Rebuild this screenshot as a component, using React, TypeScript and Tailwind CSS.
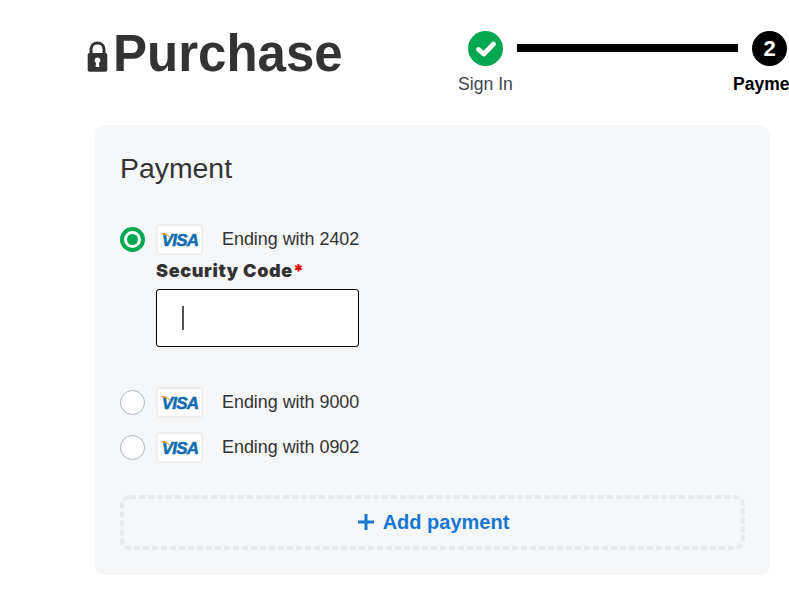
import React from "react";

function VisaCard() {
  return (
    <div className="relative flex h-[31px] w-[47px] shrink-0 items-center justify-center rounded-[3px] border-2 border-[#eeeeee] bg-white">
      <span className="relative ml-[1px] mt-[1px] text-[17px] font-bold italic leading-none tracking-[-0.8px] text-[#0f6cb0] [-webkit-text-stroke:0.5px_#0f6cb0] [font-family:'Liberation_Sans',sans-serif]">
        VISA
      </span>
      <svg className="absolute left-[3px] top-[6px]" width="14" height="10" viewBox="0 0 14 10" aria-hidden="true">
        <path d="M0 1 C4 0.5 8 1.5 10.5 7.5 C8.5 4.5 5 2.8 0 1.8 Z" fill="#e9a83a" />
      </svg>
    </div>
  );
}

function Radio({ checked }: { checked?: boolean }) {
  return checked ? (
    <div className="flex h-[25px] w-[25px] shrink-0 items-center justify-center rounded-full border-[4px] border-[#00a94f] bg-white">
      <div className="h-[11px] w-[11px] rounded-full bg-[#00a94f]" />
    </div>
  ) : (
    <div className="h-[25px] w-[25px] shrink-0 rounded-full border border-[#aab4c0] bg-white" />
  );
}

function PaymentRow({ ending, checked }: { ending: string; checked?: boolean }) {
  return (
    <div className="flex items-center">
      <Radio checked={checked} />
      <div className="ml-[11px]">
        <VisaCard />
      </div>
      <span className="mb-[2px] ml-[19px] text-[17.9px] leading-[22px] text-[#333333]">Ending with {ending}</span>
    </div>
  );
}

export default function App() {
  return (
    <div className="h-[589px] w-[789px] overflow-hidden bg-white text-[#333333] [font-family:'Liberation_Sans',Arial,sans-serif]">
      <header className="flex h-[125px] items-start pl-[87px]">
        <div className="flex w-[381px] items-start pt-[26px]">
          <svg className="mt-[15px]" width="21" height="31" viewBox="0 0 21 31" aria-hidden="true">
            <path d="M4 14 V8.5 C4 4.5 6.6 2 10.5 2 C14.4 2 17 4.5 17 8.5 V14" fill="none" stroke="#333333" strokeWidth="3" />
            <path fillRule="evenodd" d="M2.5 12 H18.5 A1.8 1.8 0 0 1 20.3 13.8 V29 A1.8 1.8 0 0 1 18.5 30.8 H2.5 A1.8 1.8 0 0 1 0.7 29 V13.8 A1.8 1.8 0 0 1 2.5 12 Z M10.5 16.5 A2.9 2.9 0 0 0 9 21.9 L8.6 26 H12.4 L12 21.9 A2.9 2.9 0 0 0 10.5 16.5 Z" fill="#333333" />
          </svg>
          <h1 className="ml-[5px] text-[51px] font-bold leading-[56px] text-[#333333]">Purchase</h1>
        </div>
        <div className="flex items-start pt-[31px]">
          <div className="flex w-[35px] flex-col items-center">
            <div className="flex h-[35px] w-[35px] items-center justify-center rounded-full bg-[#00a94f]">
              <svg width="22" height="18" viewBox="0 0 22 18" aria-hidden="true">
                <path d="M3.5 9.5 L8.8 14 L18.5 4" fill="none" stroke="#ffffff" strokeWidth="4.8" strokeLinecap="round" strokeLinejoin="round" />
              </svg>
            </div>
            <span className="mt-[8px] whitespace-nowrap text-[17.6px] leading-[20px] text-[#3c4650]">Sign In</span>
          </div>
          <div className="mx-[14px] mt-[13px] h-[8px] w-[221px] bg-black" />
          <div className="flex w-[35px] flex-col items-center">
            <div className="flex h-[35px] w-[35px] items-center justify-center rounded-full bg-black text-[22px] font-bold text-white">
              2
            </div>
            <span className="mt-[8px] whitespace-nowrap text-[17.5px] font-bold leading-[20px] text-black">Payment</span>
          </div>
        </div>
      </header>

      <main className="ml-[95px] h-[450px] w-[675px] rounded-[10px] bg-[#f5f6f8] px-[25px] pt-[27px]">
        <h2 className="text-[28.4px] font-normal leading-[32px] text-[#333333]">Payment</h2>

        <div className="mt-[40px]">
          <PaymentRow ending="2402" checked />
          <div className="ml-[36px] mt-[4px]">
            <div className="text-[18px] font-black leading-[24px] tracking-[0.65px] text-[#333333] [font-family:Inter,sans-serif]">
              Security Code<span className="text-[#e00000]">*</span>
            </div>
            <div className="mt-[6px] flex h-[58px] w-[203px] items-center rounded-[3px] border border-black bg-white pl-[25px]">
              <div className="h-[24px] w-[2px] bg-[#555555]" />
            </div>
          </div>
        </div>

        <div className="mt-[40px] flex flex-col gap-[14px]">
          <PaymentRow ending="9000" />
          <PaymentRow ending="0902" />
        </div>

        <button className="relative mt-[32px] flex h-[55px] w-[625px] items-center justify-center gap-[8px] pb-[2px] text-[20px] font-bold text-[#1976d2]">
          <svg className="absolute inset-0" width="625" height="55" viewBox="0 0 625 55" aria-hidden="true">
            <rect x="2" y="2" width="621" height="51" rx="8" fill="none" stroke="#e8e9eb" strokeWidth="4" strokeDasharray="6 3" />
          </svg>
          <svg className="ml-[1px]" width="18" height="18" viewBox="0 0 18 18" aria-hidden="true">
            <path d="M9 1 V17 M1 9 H17" fill="none" stroke="#1976d2" strokeWidth="3" />
          </svg>
          Add payment
        </button>
      </main>
    </div>
  );
}
